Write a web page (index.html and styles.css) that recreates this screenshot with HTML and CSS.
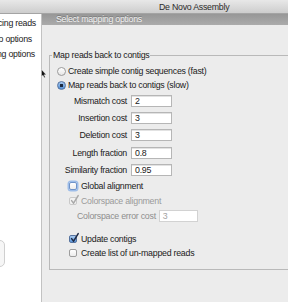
FILE: index.html
```html
<!DOCTYPE html>
<html>
<head>
<meta charset="utf-8">
<link rel="stylesheet" href="styles.css">
</head>
<body>
<div class="window">
  <div class="titlebar"><span class="title">De Novo Assembly</span></div>
  <div class="main">
    <aside class="sidebar">
      <div class="step s1"><span>2. Select sequencing reads</span></div>
      <div class="step s2"><span>3. Set de novo options</span></div>
      <div class="step s3"><span>4. Select mapping options</span></div>
      <div class="sidebtn"></div>
    </aside>
    <section class="panel">
      <div class="header">Select mapping options</div>
      <fieldset class="group">
        <legend>Map reads back to contigs</legend>
        <div class="opt radio-row"><span class="radio"></span><span>Create simple contig sequences (fast)</span></div>
        <div class="opt radio-row"><span class="radio on"></span><span>Map reads back to contigs (slow)</span></div>
        <div class="form">
          <label>Mismatch cost</label><span class="field">2</span>
          <label>Insertion cost</label><span class="field">3</span>
          <label>Deletion cost</label><span class="field">3</span>
          <label>Length fraction</label><span class="field">0.8</span>
          <label>Similarity fraction</label><span class="field">0.95</span>
        </div>
        <div class="opt check-row"><span class="check focus"></span><span>Global alignment</span></div>
        <div class="opt check-row disabled"><span class="check on dis"><svg viewBox="0 0 9 10"><path d="M1.6 5.6 L3.6 8.2 L8.2 0.6"/></svg></span><span>Colorspace alignment</span></div>
        <div class="sub-row"><span>Colorspace error cost</span><span class="field dis">3</span></div>
        <div class="opt check-row small gap"><span class="check on"><svg viewBox="0 0 9 10"><path d="M1.6 5.6 L3.6 8.2 L8.2 0.6"/></svg></span><span>Update contigs</span></div>
        <div class="opt check-row small"><span class="check"></span><span>Create list of un-mapped reads</span></div>
      </fieldset>
    </section>
  </div>
  <svg class="cursor" viewBox="0 0 6 10"><path d="M0.5 0.5 L0.5 7.5 L2 6.2 L3.2 8.8 L4.3 8.3 L3.1 5.8 L5.2 5.8 Z"/></svg>
</div>
</body>
</html>
```
FILE: styles.css
```css
html, body {
  margin: 0;
  padding: 0;
}
body {
  width: 288px;
  height: 302px;
  overflow: hidden;
  font-family: "Liberation Sans", Arial, sans-serif;
  font-size: 8.8px;
  letter-spacing: -0.25px;
  color: #1a1a1a;
  background: #ececec;
}
.window {
  position: relative;
  width: 288px;
  height: 302px;
  overflow: hidden;
}
.titlebar {
  height: 13px;
  border-bottom: 1px solid #a4a4a4;
  background: linear-gradient(#e8e8e8, #cdcdcd);
  display: flex;
  align-items: center;
  padding-left: 159px;
  color: #2b2b2b;
}
.main {
  display: flex;
  height: 288px;
}
.sidebar {
  width: 41px;
  flex: none;
  background: #fff;
  border-right: 1px solid #c2c2c2;
  padding-top: 2px;
  display: flex;
  flex-direction: column;
  overflow: hidden;
}
.step {
  direction: rtl;
  white-space: nowrap;
  overflow: hidden;
  line-height: 15.5px;
  padding-right: 5px;
}
.step span {
  direction: ltr;
  unicode-bidi: isolate;
}
.s2 { padding-right: 9px; }
.s3 { padding-right: 6px; }
.sidebtn {
  margin-top: 177px;
  margin-left: -25px;
  width: 30px;
  height: 27px;
  flex: none;
  box-sizing: border-box;
  border: 1px solid #cfcfcf;
  border-radius: 5px;
  background: #f6f6f6;
}
.panel {
  flex: 1;
  min-width: 0;
  overflow: hidden;
  display: flex;
  flex-direction: column;
  align-items: flex-start;
}
.header {
  align-self: stretch;
  height: 11px;
  line-height: 11px;
  background: linear-gradient(#979797, #ababab);
  color: #f2f2f2;
  padding-left: 14px;
  text-shadow: 0 -1px 0 #7a7a7a;
  white-space: nowrap;
}
.group {
  margin: 25px 0 0 7px;
  padding: 4px 0 9px 0;
  border: 1px solid #b9b9b9;
  width: 300px;
  min-width: 0;
  flex: none;
}
.group legend {
  margin-left: 2px;
  padding: 0 1px;
  line-height: 10px;
}
.opt {
  display: flex;
  align-items: center;
  height: 14px;
  white-space: nowrap;
}
.radio-row {
  padding-left: 7px;
  gap: 2px;
}
.check-row {
  padding-left: 19px;
  gap: 4px;
  height: 15px;
}
.check-row.small { height: 14px; }
.gap { margin-top: 8px; }
.radio {
  width: 9px;
  height: 9px;
  flex: none;
  box-sizing: border-box;
  border-radius: 50%;
  border: 1px solid #9a9a9a;
  background: linear-gradient(#ffffff, #e6e6e6);
}
.radio.on {
  border-color: #56739f;
  background: radial-gradient(circle, #1b2940 0 1.4px, transparent 2px), linear-gradient(#a6c8ef, #4f8ed6);
}
.check {
  position: relative;
  width: 8px;
  height: 8px;
  flex: none;
  box-sizing: border-box;
  border: 1px solid #9d9d9d;
  border-radius: 2px;
  background: linear-gradient(#ffffff, #ececec);
}
.check.focus {
  border-color: #6f93c9;
  box-shadow: 0 0 0 1.5px #9dbde9;
}
.check.on {
  border-color: #56739f;
  background: linear-gradient(#abcbf0, #5b96da);
}
.check.dis {
  border-color: #c9c9c9;
  background: #f2f2f2;
}
.check svg {
  position: absolute;
  left: -0.5px;
  top: -3px;
  width: 9px;
  height: 10px;
  overflow: visible;
}
.check svg path {
  fill: none;
  stroke: #1d2944;
  stroke-width: 1.5;
  stroke-linecap: round;
  stroke-linejoin: round;
}
.check.dis svg path { stroke: #a9a9a9; }
.disabled { color: #9a9a9a; }
.form {
  display: grid;
  grid-template-columns: 77px 41px;
  grid-auto-rows: 17.4px;
  column-gap: 4px;
  align-items: center;
  white-space: nowrap;
}
.form label { text-align: right; }
.field {
  height: 12px;
  box-sizing: border-box;
  border: 1px solid #b6b6b6;
  background: #fff;
  padding-left: 3px;
  line-height: 10px;
  box-shadow: inset 0 1px 0 #e2e2e2;
}
.field.dis {
  width: 39px;
  color: #a3a3a3;
  border-color: #d2d2d2;
  box-shadow: none;
}
.sub-row {
  display: flex;
  align-items: center;
  height: 15px;
  padding-left: 27px;
  gap: 3px;
  color: #8e8e8e;
  white-space: nowrap;
}
.cursor {
  position: absolute;
  left: 41px;
  top: 69px;
  width: 6px;
  height: 10px;
}
.cursor path {
  fill: #111;
  stroke: #fff;
  stroke-width: 0.4;
}
```
